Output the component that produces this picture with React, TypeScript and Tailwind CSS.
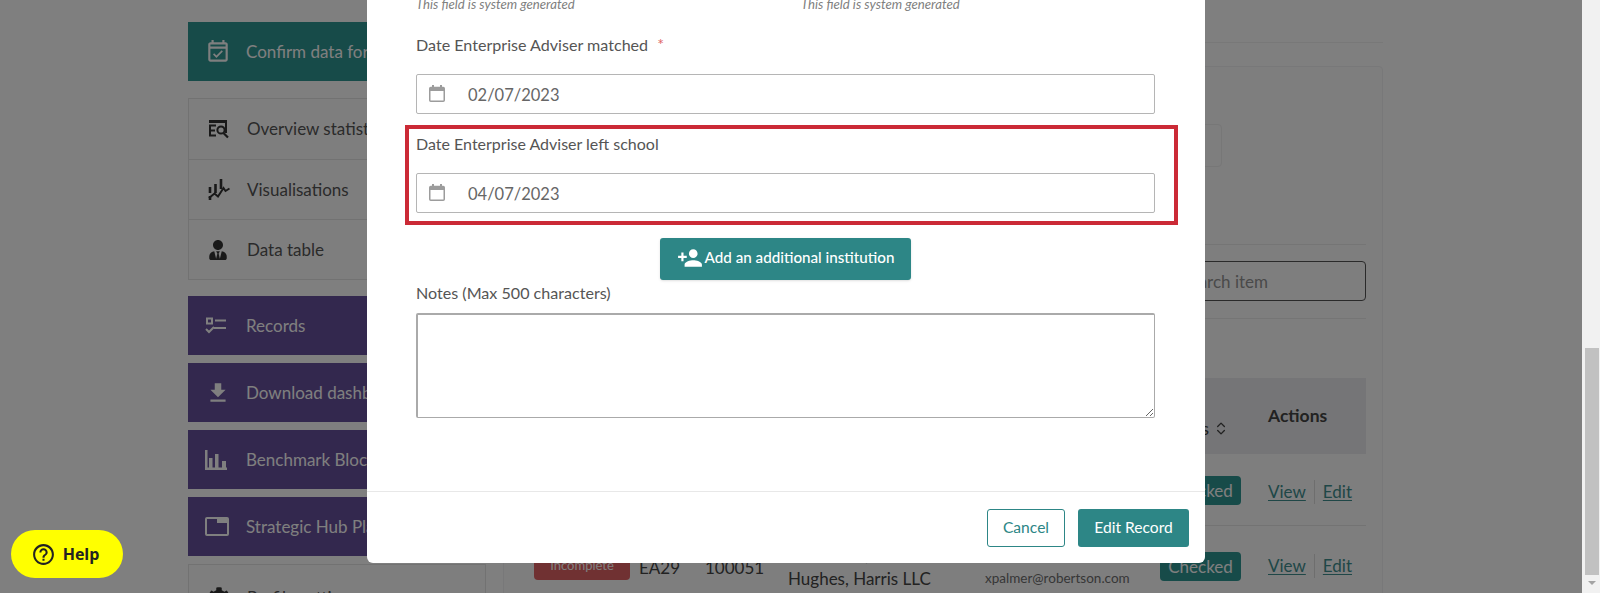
import React from "react";
import { ChevronsUpDown } from "lucide-react";
import { FaCog, FaUserTie } from "react-icons/fa";
import {
  MdFileDownload,
  MdHelpOutline,
  MdOutlineEventAvailable,
  MdPersonAddAlt1,
} from "react-icons/md";

const OverviewIcon = () => (
  <svg width="22" height="20" viewBox="0 0 22 20" fill="none" stroke="currentColor">
    <path d="M1 2h17v12" strokeWidth="2" />
    <path d="M1 1h18v3H1z" fill="currentColor" stroke="none" />
    <path d="M8 6.5H2v10h6M2 11.5h5" strokeWidth="2" />
    <circle cx="13" cy="11" r="3.6" strokeWidth="2" />
    <path d="M15.5 14l4.5 4.5" strokeWidth="2.2" />
  </svg>
);

const VisualIcon = () => (
  <svg width="22" height="22" viewBox="0 0 22 22" fill="none" stroke="currentColor" strokeWidth="2.6">
    <path d="M2 8v6M7.5 5v9M13 0v10" />
    <path d="M1 19l5.5-4.5 3.5 3L15.5 9l2 3 4-2.5" strokeWidth="2" />
    <path d="M2 17v4" />
  </svg>
);

const RecordsIcon = () => (
  <svg width="22" height="18" viewBox="0 0 22 18" fill="none" stroke="currentColor" strokeWidth="2">
    <rect x="2" y="1.5" width="5" height="5" />
    <path d="M10 3.5h11M9 11h12" />
    <path d="M1 12l3 3 5-5" />
  </svg>
);

const BenchmarkIcon = () => (
  <svg width="22" height="20" viewBox="0 0 22 20" fill="currentColor">
    <path d="M0 0h2.5v17.5H22V20H0z" />
    <path d="M4 8h3.5v10H4zM10 4h3.5v14H10zM17 11h4v7h-4z" />
  </svg>
);

const StrategicIcon = () => (
  <svg width="24" height="19" viewBox="0 0 24 19" fill="none" stroke="currentColor">
    <rect x="1" y="1" width="22" height="17" rx="1" strokeWidth="2" />
    <path d="M12 1h11v5H12z" fill="currentColor" stroke="none" />
  </svg>
);

const CalendarIcon = () => (
  <svg width="16" height="17" viewBox="0 0 16 17" fill="none" className="ml-[12px] -mt-[2px] shrink-0 text-[#9c9c9c]">
    <rect x="0.75" y="2.5" width="14.5" height="13.75" rx="1" stroke="currentColor" strokeWidth="1.5" />
    <path d="M1 3h14v3H1zM3 0h2v3H3zM11 0h2v3h-2z" fill="currentColor" />
  </svg>
);

const navList = [
  { label: "Overview statistics", icon: <OverviewIcon /> },
  { label: "Visualisations", icon: <VisualIcon /> },
  { label: "Data table", icon: <FaUserTie size={20} /> },
];

const purpleList = [
  { label: "Records", icon: <RecordsIcon /> },
  { label: "Download dashboard", icon: <MdFileDownload size={26} /> },
  { label: "Benchmark Blocks", icon: <BenchmarkIcon /> },
  { label: "Strategic Hub Planning", icon: <StrategicIcon /> },
];

const Sidebar = () => (
  <div className="w-[298px] shrink-0 pt-[22px] text-[17px]">
    <div className="h-[59px] flex items-center bg-[#2f9693] text-white">
      <span className="w-[58px] pl-[17px] shrink-0">
        <MdOutlineEventAvailable size={26} />
      </span>
      <span className="whitespace-nowrap">Confirm data for this year</span>
    </div>
    <div className="mt-[17px] border border-[#e4e4e4] bg-[#fdfdfd] text-[#555]">
      {navList.map((item, i) => (
        <div
          key={item.label}
          className={`h-[60px] flex items-center ${i > 0 ? "border-t border-[#e4e4e4]" : ""}`}
        >
          <span className="w-[58px] pl-[19px] shrink-0 text-[#333]">{item.icon}</span>
          <span className="whitespace-nowrap">{item.label}</span>
        </div>
      ))}
    </div>
    <div className="mt-[16px] flex flex-col gap-2">
      {purpleList.map((item) => (
        <div key={item.label} className="h-[59px] flex items-center bg-[#66509c] text-white">
          <span className="w-[58px] pl-[17px] shrink-0">{item.icon}</span>
          <span className="whitespace-nowrap">{item.label}</span>
        </div>
      ))}
    </div>
    <div className="mt-2 border border-[#e4e4e4] bg-[#fdfdfd] pt-[3px] text-[#555]">
      <div className="h-[60px] flex items-center">
        <span className="w-[58px] pl-[19px] shrink-0 text-[#333]">
          <FaCog size={22} />
        </span>
        <span className="whitespace-nowrap">Profile settings</span>
      </div>
    </div>
  </div>
);

const Actions = () => (
  <div className="flex items-center text-[17px] text-[#3f8f8f]">
    <span className="underline underline-offset-2">View</span>
    <span className="mx-[8px] h-[24px] border-l border-[#ddd]"></span>
    <span className="underline underline-offset-2">Edit</span>
  </div>
);

const Checked = () => (
  <span className="inline-flex h-[29px] w-[81px] items-center justify-center rounded-[4px] bg-[#2f9693] text-[17px] text-white">
    Checked
  </span>
);

const tableCols = "grid grid-cols-[117px_66px_83px_197px_175px_108px_1fr]";

const MainCard = () => (
  <div className="ml-[17px] w-[880px] shrink-0">
    <div className="h-[43px] border-b border-[#f0f0f0]"></div>
    <div className="mt-[23px] h-[600px] rounded border border-[#f0f0f2] bg-[#fcfcfd] pl-[18px] pr-[16px] pt-[57px]">
      <div className="h-[43px] w-[700px] rounded border border-[#eee]"></div>
      <div className="mt-[77px] border-t border-[#eaeaea] pt-[16px]">
        <div className="ml-auto flex h-[40px] w-[400px] items-center justify-end rounded-sm border border-[#555] pr-[97px] pt-px text-[17px] text-[#949494]">
          Search item
        </div>
      </div>
      <div className="mt-[17px] border-t border-[#eaeaea]"></div>
      <div className="mt-[59px]">
        <div className={`${tableCols} h-[76px] items-center bg-[#ebebee] text-[18px] text-[#444]`}>
          <span></span>
          <span></span>
          <span></span>
          <span></span>
          <span></span>
          <span className="flex items-center justify-end pr-[39px] pt-[24px]">
            Status
            <ChevronsUpDown size={19} className="ml-1" />
          </span>
          <span className="font-bold text-[17.5px]">Actions</span>
        </div>
        <div className={`${tableCols} h-[72px] items-center border-b border-[#e6e6e6] pt-[2px]`}>
          <span></span>
          <span></span>
          <span></span>
          <span></span>
          <span></span>
          <span><Checked /></span>
          <span className="pt-[2px]"><Actions /></span>
        </div>
        <div className={`${tableCols} h-[72px] items-start pt-[25px] text-[17px] text-[#444]`}>
          <span className="pl-[12px]">
            <span className="inline-flex h-[29px] w-[96px] items-center justify-center rounded-[4px] bg-[#e06264] text-[13px] text-white">
              Incomplete
            </span>
          </span>
          <span className="pt-[4px]">EA29</span>
          <span className="pt-[4px]">100051</span>
          <span className="-mt-[8px] leading-[24px]">Robertson,<br />Hughes, Harris LLC</span>
          <span className="-mt-[6px] text-[13.5px] leading-[22px] text-[#6e6e6e]">Xavier Palmer<br />xpalmer@robertson.com</span>
          <span className="pt-px"><Checked /></span>
          <span className="pt-[2px]"><Actions /></span>
        </div>
      </div>
    </div>
  </div>
);

const DateField = ({ value }: { value: string }) => (
  <div className="flex h-[40px] items-center rounded-[2px] border border-[#b5b5b5] bg-white">
    <CalendarIcon />
    <input
      readOnly
      value={value}
      className="ml-[23px] flex-1 bg-transparent pt-[2px] text-[16.5px] text-[#666] outline-none"
    />
  </div>
);

const Modal = () => (
  <div className="absolute left-[367px] top-0 flex h-[563px] w-[838px] flex-col rounded-b-md bg-white text-[#555]">
    <div className="h-[491px] overflow-hidden pl-[49px] pr-[50px]">
      <div className="-mt-[2px] flex h-[14px] items-center text-[13.2px] italic text-[#808080]">
        <span className="w-[385px]">This field is system generated</span>
        <span>This field is system generated</span>
      </div>
      <div className="mt-[21px] flex h-[24px] items-center text-[16.1px]">
        Date Enterprise Adviser matched
        <span className="ml-[9px] -mt-[2px] text-[16px] text-[#e06666]">*</span>
      </div>
      <div className="mt-[17px]">
        <DateField value="02/07/2023" />
      </div>
      <div className="mt-[11px] -ml-[11px] -mr-[23px] h-[100px] border-4 border-[#cb2a36] pl-[7px] pr-[19px] pt-[3px]">
        <div className="flex h-[24px] items-center text-[16px]">
          Date Enterprise Adviser left school
        </div>
        <div className="mt-[17px]">
          <DateField value="04/07/2023" />
        </div>
      </div>
      <div className="mt-[13px] flex justify-center">
        <button className="flex h-[42px] w-[251px] items-center justify-center rounded-[3px] bg-[#2d8686] pb-[3px] text-[15.2px] font-medium text-white shadow-sm">
          <MdPersonAddAlt1 size={26} className="mr-[2px] -scale-x-100" />
          Add an additional institution
        </button>
      </div>
      <div className="mt-px flex h-[24px] items-center text-[16.1px]">Notes (Max 500 characters)</div>
      <textarea className="mt-[8px] block h-[105px] w-full rounded-[2px] border border-[#aaa] border-t-2 border-l-2 bg-white outline-none"></textarea>
    </div>
    <div className="flex flex-1 items-start justify-end gap-[13px] border-t border-[#e8e8e8] pr-[16px] pt-[17px] text-[15.6px]">
      <button className="h-[38px] w-[78px] rounded-[3px] border border-[#2d8686] text-[#2d8686]">Cancel</button>
      <button className="h-[38px] w-[111px] rounded-[3px] bg-[#2d8686] text-white">Edit Record</button>
    </div>
  </div>
);

const Scrollbar = () => (
  <div className="flex w-[18px] shrink-0 flex-col items-center bg-[#f1f1f1] pl-[2px] pt-[348px]">
    <div className="h-[227px] w-[14px] bg-[#c1c1c1]"></div>
    <div className="mt-[6px] h-0 w-0 border-x-[4px] border-t-[4px] border-x-transparent border-t-[#a3a3a3]"></div>
  </div>
);

export default function App() {
  return (
    <div className="flex h-[593px] w-[1600px] overflow-hidden bg-white font-['Lato',sans-serif]">
      <div className="relative flex flex-1 overflow-hidden pl-[188px]">
        <Sidebar />
        <MainCard />
        <div className="absolute inset-0 bg-black/50"></div>
        <Modal />
        <button className="absolute left-[11px] top-[530px] flex h-[48px] w-[112px] items-center justify-center gap-[7px] rounded-full bg-[#ffff00] pr-[4px] font-['Open_Sans',sans-serif] text-[16px] font-bold text-[#222]">
          <MdHelpOutline size={25} />
          Help
        </button>
      </div>
      <Scrollbar />
    </div>
  );
}
